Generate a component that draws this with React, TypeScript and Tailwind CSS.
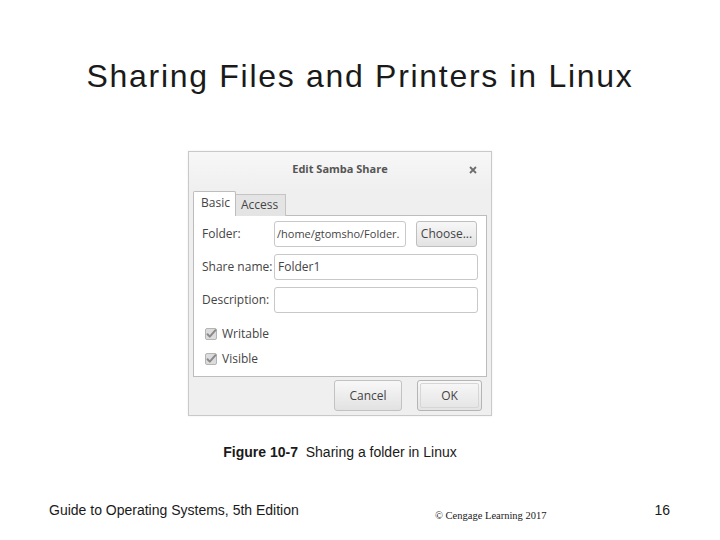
import React from 'react';

const CheckIcon: React.FC = () => (
  <svg width="12" height="12" viewBox="0 0 12 12" className="shrink-0">
    <rect x="0.5" y="0.5" width="11" height="11" rx="1.5" fill="#dcdcdc" stroke="#b4b4b4" />
    <path d="M2.5 6.2 L4.8 8.6 L10.5 2.2" fill="none" stroke="#8a8a8a" strokeWidth="2" strokeLinecap="round" strokeLinejoin="round" />
  </svg>
);

const Field: React.FC<{ label: string; children: React.ReactNode }> = ({ label, children }) => (
  <div className="flex items-center h-[26px]">
    <div className="w-[72px] shrink-0 text-[#444]">{label}</div>
    {children}
  </div>
);

const SambaDialog: React.FC = () => {
  return (
    <div
      className="w-[304px] h-[265px] border border-[#c9c9c9] bg-[#efefef] flex flex-col text-[12px] text-[#444] shadow-[0_0_2px_rgba(0,0,0,0.08)]"
      style={{ fontFamily: '"Open Sans", "DejaVu Sans", sans-serif' }}
    >
      {/* Header */}
      <div className="relative h-[39px] shrink-0 flex items-center justify-center bg-gradient-to-b from-[#f7f7f7] to-[#efefef] pb-[4px]">
        <span className="text-[11px] font-bold text-[#555]">Edit Samba Share</span>
        <svg width="8" height="8" viewBox="0 0 8 8" className="absolute right-[14px] top-[14px]">
          <path d="M1 1 L7 7 M7 1 L1 7" stroke="#6e6e6e" strokeWidth="1.8" />
        </svg>
      </div>

      {/* Tabs */}
      <div className="flex items-end h-[25px] px-[4px] -mb-px relative z-10">
        <div className="w-[43px] h-[25px] bg-white border border-b-0 border-[#bdbdbd] rounded-t-[2px] pl-[7px] pt-[3px] leading-[16px]">
          Basic
        </div>
        <div className="w-[50px] h-[22px] bg-[#e4e4e4] border border-l-0 border-b-0 border-[#c4c4c4] pl-[5px] pt-[2px] leading-[16px]">
          Access
        </div>
      </div>

      {/* Panel */}
      <div className="mx-[4px] h-[162px] shrink-0 bg-white border border-[#bdbdbd] px-[8px] pt-[5px] flex flex-col">
        <Field label="Folder:">
          <div className="w-[132px] h-[26px] border border-[#c8c8c8] rounded-[3px] px-[2px] leading-[24px] text-[11px] whitespace-nowrap">
            /home/gtomsho/Folder.
          </div>
          <div className="ml-[10px] w-[61px] h-[26px] border border-[#bfbfbf] rounded-[3px] bg-gradient-to-b from-[#f7f7f7] to-[#e3e3e3] flex items-center justify-center">
            Choose...
          </div>
        </Field>
        <div className="mt-[7px]">
          <Field label="Share name:">
            <div className="flex-1 h-[26px] border border-[#c8c8c8] rounded-[3px] px-[3px] leading-[24px]">Folder1</div>
          </Field>
        </div>
        <div className="mt-[7px]">
          <Field label="Description:">
            <div className="flex-1 h-[26px] border border-[#c8c8c8] rounded-[3px]" />
          </Field>
        </div>
        <div className="mt-[13px] ml-[3px] flex items-center gap-[5px] h-[16px]">
          <CheckIcon />
          <span>Writable</span>
        </div>
        <div className="mt-[9px] ml-[3px] flex items-center gap-[5px] h-[16px]">
          <CheckIcon />
          <span>Visible</span>
        </div>
      </div>

      {/* Buttons */}
      <div className="flex justify-end gap-[15px] pr-[9px] mt-[3px]">
        <div className="w-[68px] h-[31px] border border-[#c2c2c2] rounded-[3px] bg-gradient-to-b from-[#f8f8f8] to-[#e2e2e2] flex items-center justify-center">
          Cancel
        </div>
        <div className="w-[65px] h-[31px] border border-[#b5b5b5] rounded-[3px] bg-gradient-to-b from-[#f8f8f8] to-[#e4e4e4] p-[2px]">
          <div className="w-full h-full border border-[#d6d6d6] rounded-[2px] flex items-center justify-center">
            OK
          </div>
        </div>
      </div>
    </div>
  );
};

export default function App() {
  return (
    <div
      className="w-[720px] h-[540px] bg-white flex flex-col text-[#1a1a1a]"
      style={{ fontFamily: '"Liberation Sans", Arial, sans-serif' }}
    >
      <h1 className="pt-[60px] text-[32px] leading-none tracking-[1.7px] text-center">
        Sharing Files and Printers in Linux
      </h1>

      <div className="mt-[59px] pl-[188px]">
        <SambaDialog />
      </div>

      <div className="mt-[29px] pl-[188px]">
        <div className="w-[304px] text-center text-[14px] leading-none whitespace-pre">
          <span className="font-bold">Figure 10-7</span>
          {'  Sharing a folder in Linux'}
        </div>
      </div>

      <div className="mt-[44px] flex items-start pl-[49px] pr-[50px] text-[14px] leading-none">
        <div className="w-[386px]">Guide to Operating Systems, 5th Edition</div>
        <div className="mt-[8px] text-[10.5px]" style={{ fontFamily: '"Liberation Serif", serif' }}>
          © Cengage Learning 2017
        </div>
        <div className="ml-auto">16</div>
      </div>
    </div>
  );
}
